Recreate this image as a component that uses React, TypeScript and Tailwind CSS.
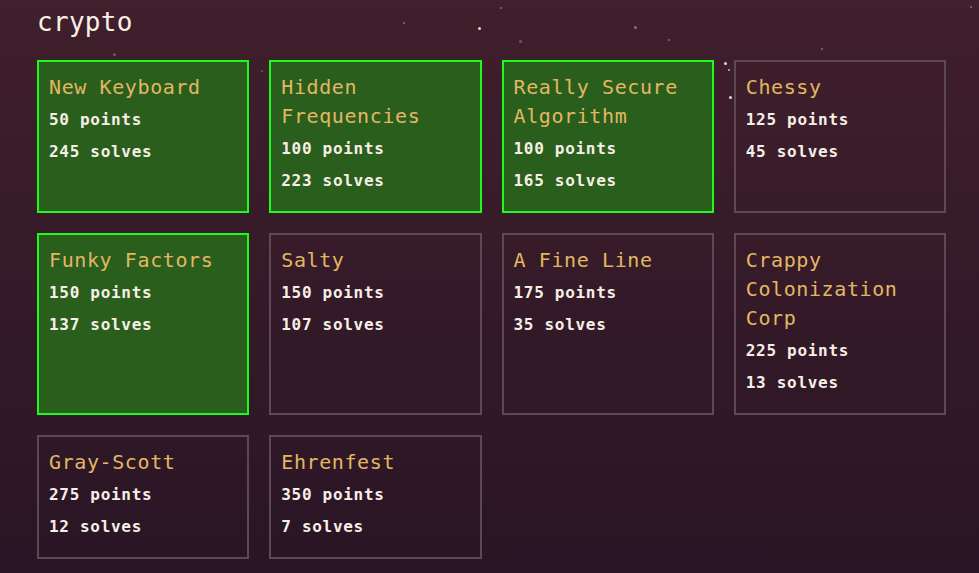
import React from 'react'

interface Challenge {
  name: string
  points: number
  solves: number
  solved?: boolean
}

const challenges: Challenge[] = [
  { name: 'New Keyboard', points: 50, solves: 245, solved: true },
  { name: 'Hidden Frequencies', points: 100, solves: 223, solved: true },
  { name: 'Really Secure Algorithm', points: 100, solves: 165, solved: true },
  { name: 'Chessy', points: 125, solves: 45 },
  { name: 'Funky Factors', points: 150, solves: 137, solved: true },
  { name: 'Salty', points: 150, solves: 107 },
  { name: 'A Fine Line', points: 175, solves: 35 },
  { name: 'Crappy Colonization Corp', points: 225, solves: 13 },
  { name: 'Gray-Scott', points: 275, solves: 12 },
  { name: 'Ehrenfest', points: 350, solves: 7 },
]

// little specks in the sky
const stars = [
  { x: 113, y: 53, s: 3, c: 'bg-[#6e5566]' },
  { x: 261, y: 70, s: 2, c: 'bg-[#6e5566]' },
  { x: 403, y: 22, s: 2, c: 'bg-[#8a6d7a]' },
  { x: 478, y: 27, s: 3, c: 'bg-[#e8d8c8]' },
  { x: 500, y: 7, s: 2, c: 'bg-[#8a6d7a]' },
  { x: 519, y: 40, s: 3, c: 'bg-[#6e5566]' },
  { x: 634, y: 26, s: 3, c: 'bg-[#8a6d7a]' },
  { x: 668, y: 39, s: 2, c: 'bg-[#8a6d7a]' },
  { x: 724, y: 62, s: 3, c: 'bg-[#e8d8c8]' },
  { x: 728, y: 69, s: 2, c: 'bg-[#c8b8b0]' },
  { x: 729, y: 96, s: 3, c: 'bg-[#e8d8c8]' },
  { x: 821, y: 48, s: 2, c: 'bg-[#8a6d7a]' },
  { x: 970, y: 6, s: 2, c: 'bg-[#8a6d7a]' },
]

function ChallengeCard({ challenge }: { challenge: Challenge }) {
  const box = challenge.solved
    ? 'border-[#1cfc1c] bg-[#2a5e1d]'
    : 'border-[#5d4857] bg-transparent'
  return (
    <div className={`border-2 px-[10px] pt-[11px] pb-[10px] ${box}`}>
      <h3 className="text-[20px] leading-[29px] tracking-[0.6px] text-[#e3b762] mb-[6px]">
        {challenge.name}
      </h3>
      <p className="text-[16px] leading-[24px] tracking-[0.7px] text-[#f7efe6] font-bold mb-[8px]">
        {challenge.points} points
      </p>
      <p className="text-[16px] leading-[24px] tracking-[0.7px] text-[#f7efe6] font-bold mb-[8px]">
        {challenge.solves} solves
      </p>
    </div>
  )
}

export default function App() {
  return (
    <div
      className="relative w-[979px] h-[573px] overflow-hidden bg-gradient-to-b from-[#411f2c] to-[#291525]"
      style={{ fontFamily: '"DejaVu Sans Mono", "Liberation Mono", monospace' }}
    >
      {stars.map((st, i) => (
        <span
          key={i}
          className={`absolute rounded-full ${st.c}`}
          style={{ left: st.x, top: st.y, width: st.s, height: st.s }}
        />
      ))}
      <div className="relative pl-[37px] pt-[6px] w-[946px]">
        <h2 className="text-[26px] leading-[32px] tracking-[0.3px] text-[#f9f1e8] mb-[22px]">crypto</h2>
        <div className="grid grid-cols-4 gap-x-[20px] gap-y-[20px] items-stretch">
          {challenges.map((c) => (
            <ChallengeCard key={c.name} challenge={c} />
          ))}
        </div>
      </div>
    </div>
  )
}
